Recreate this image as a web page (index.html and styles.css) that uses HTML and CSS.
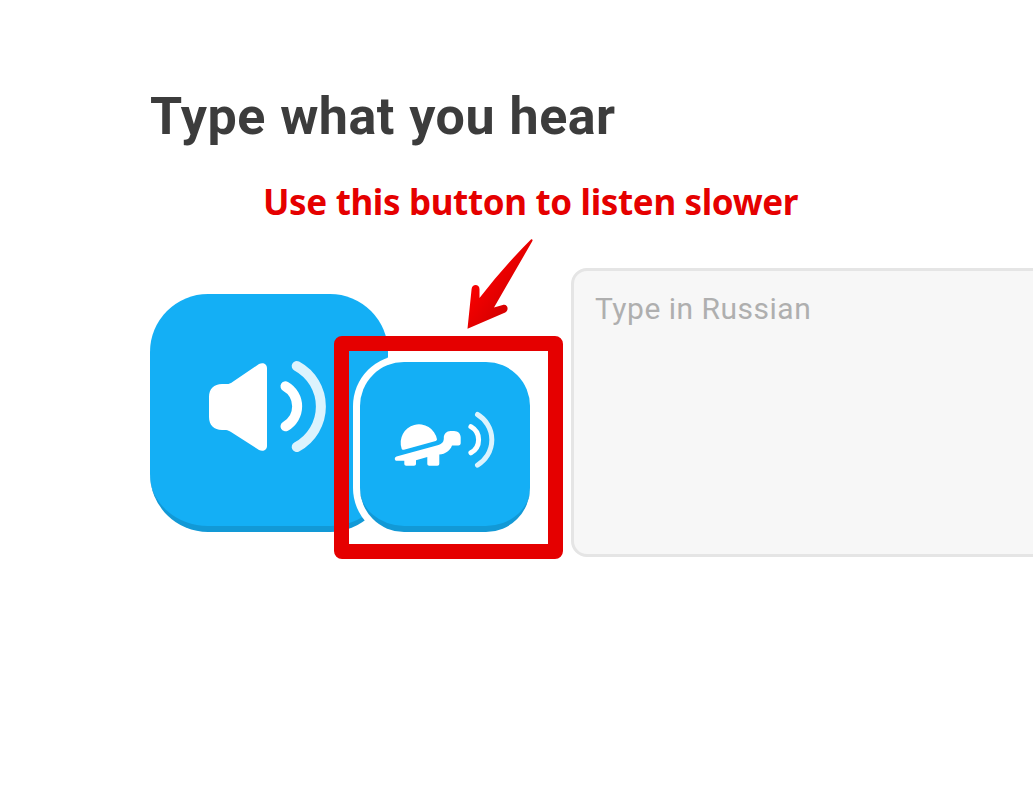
FILE: index.html
```html
<!DOCTYPE html>
<html lang="en">
<head>
	<meta charset="UTF-8">
	<meta name="viewport" content="width=device-width, initial-scale=1.0">
	<title>Type what you hear</title>
	<link rel="stylesheet" href="styles.css">
</head>
<body>
<main class="challenge">
	<h1 class="title">Type what you hear</h1>
	<p class="note">Use this button to listen slower</p>
	<div class="listen">
		<div class="speakers">
			<button class="speaker" type="button" aria-label="Listen">
				<svg viewBox="0 0 238 238">
					<path fill="#fff" d="M72 90h4c2 0 3 0 5-1l28-19c4-2 8 0 8 4v78c0 4-4 6-8 4l-28-18c-2-1-3-2-5-2h-4c-8 0-13-5-13-13v-20c0-8 5-13 13-13z"/>
					<path class="wave" d="M135.500 92.300a23 23 0 0 1 0 40"/>
					<path class="wave faded" d="M146.700 72a46 46 0 0 1 0 81"/>
				</svg>
			</button>
			<button class="speaker slow" type="button" aria-label="Listen slower">
				<svg viewBox="0 0 170 170">
					<g fill="#fff">
						<path d="M44 87.700c-1.200.3-2 0-2.400-1.300a18.300 18.300 0 1 1 35.300-9.400c.2 1-.2 1.600-1.200 1.900z"/>
						<path d="M36.500 94.400l42-11.500c3.300-.9 5-2.600 5.300-5.900v-1c0-4 2.700-7 6.700-7h3.500c4 0 6.700 2.800 6.700 6.600v5.400c0 1.600-.8 2.400-2.400 2.400H92c-2 5.400-6.500 8.400-12.700 9.200v9.100c0 1.300-.7 2-2 2h-8c-1.300 0-2-.7-2-2v-6.600L56 98.200v3.500c0 1.300-.7 2-2 2h-7.700c-1.300 0-2-.7-2-2v-3h-7.500c-2.500 0-2.700-3.600-.3-4.300z"/>
					</g>
					<path class="wave" d="M110.900 64.600a15 15 0 0 1 0 26.200"/>
					<path class="wave faded" d="M117.500 52.500a29.500 29.500 0 0 1 0 50.600"/>
				</svg>
			</button>
			<div class="highlight"></div>
			<svg class="arrow" viewBox="0 0 70 94">
				<defs>
					<linearGradient id="red" x1="0" y1="0" x2="1" y2="1">
						<stop offset=".35" stop-color="#f50000"/>
						<stop offset=".65" stop-color="#d90000"/>
					</linearGradient>
				</defs>
				<path fill="url(#red)" d="M2.500 90.700L6.600 51c.5-5.500 7.900-5 7.900 0v9Q38 29.500 65.700 1.800c1-1 2.400-.2 1.700 1.200L29 69.500l8.700-2.600c5.300-1.500 6.500 5.500 2.500 7.500z"/>
			</svg>
		</div>
		<textarea class="answer" placeholder="Type in Russian"></textarea>
	</div>
</main>
</body>
</html>
```
FILE: styles.css
```css
* {
	box-sizing: border-box;
}
body {
	margin: 0;
	background: #fff;
	font-family: Roboto, "Liberation Sans", sans-serif;
}
.challenge {
	height: 100vh;
	padding: 87px 0 0 150px;
	overflow: hidden;
}
.title {
	margin: 0;
	font-size: 52px;
	line-height: 60px;
	font-weight: 700;
	letter-spacing: 0.5px;
	word-spacing: 1px;
	color: #3c3c3c;
}
.note {
	margin: 29px 0 0 113px;
	font-family: "Noto Sans", "Open Sans", sans-serif;
	font-size: 35px;
	line-height: 52px;
	font-weight: 700;
	letter-spacing: -0.35px;
	color: #e50000;
	white-space: nowrap;
}
.listen {
	display: flex;
	align-items: flex-start;
	margin-top: 40px;
}
.speakers {
	position: relative;
	flex: none;
	width: 421px;
	padding-top: 26px;
}
.speaker {
	display: flex;
	align-items: flex-start;
	width: 238px;
	height: 238px;
	padding: 0;
	border: 0;
	border-bottom: 6px solid #1299d6;
	border-radius: 58px;
	background: #14aff5;
}
.speaker svg {
	flex: none;
	width: 100%;
	overflow: visible;
}
.wave {
	fill: none;
	stroke: #fff;
	stroke-width: 10;
	stroke-linecap: round;
}
.faded {
	stroke: #dcf3fd;
}
/* small button sits over the corner of the big one */
.slow {
	position: absolute;
	left: 210px;
	top: 94px;
	width: 170px;
	height: 170px;
	border-radius: 44px;
	box-shadow: 0 0 0 7px #fff;
}
.slow .wave {
	stroke-width: 5;
}
.highlight {
	position: absolute;
	left: 184px;
	top: 68px;
	width: 229px;
	height: 223px;
	border: 15px solid #e50000;
	border-radius: 8px;
}
.arrow {
	position: absolute;
	left: 315px;
	top: -30px;
	width: 70px;
	height: 94px;
}
.answer {
	flex: 1;
	height: 289px;
	margin-right: -60px;
	padding: 20px 21px;
	border: 3px solid #e5e5e5;
	border-radius: 16px;
	background: #f7f7f7;
	font-family: inherit;
	font-size: 30px;
	line-height: 36px;
	letter-spacing: 0.5px;
	resize: none;
}
.answer::placeholder {
	color: #afafaf;
}
```
